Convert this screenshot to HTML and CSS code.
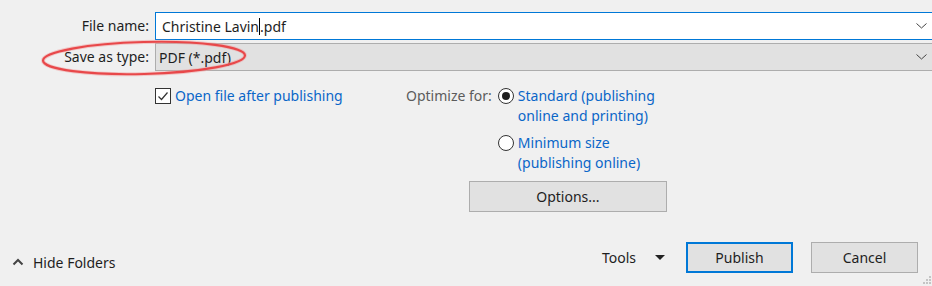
FILE: index.html
```html
<html>
    <head>
        <link rel="stylesheet" href="styles.css">
    </head>
    <body>
        <div class="dialog">
            <div class="fields">
                <label class="label">File name:</label>
                <div class="field field-name">
                    <span>Christine Lavin<span class="caret"></span>.pdf</span>
                    <svg class="chev" width="11" height="6" viewBox="0 0 11 6"><path d="M0.5 0.5 L5.5 5 L10.5 0.5" fill="none" stroke="#444" stroke-width="1"/></svg>
                </div>
                <label class="label">Save as type:</label>
                <div class="field field-type">
                    <span>PDF (*.pdf)</span>
                    <svg class="chev" width="11" height="6" viewBox="0 0 11 6"><path d="M0.5 0.5 L5.5 5 L10.5 0.5" fill="none" stroke="#444" stroke-width="1"/></svg>
                </div>
            </div>

            <div class="options">
                <div class="check-col">
                    <div class="check-row">
                        <span class="checkbox">
                            <svg width="14" height="14" viewBox="0 0 14 14"><path d="M2.5 7.5 L5.5 10.5 L11.5 3.5" fill="none" stroke="#333" stroke-width="1.2"/></svg>
                        </span>
                        <span class="link">Open file after publishing</span>
                    </div>
                </div>
                <div class="optimize">
                    <span class="opt-label">Optimize for:</span>
                    <div class="radios">
                        <div class="radio-row">
                            <span class="radio on"></span>
                            <span class="link">Standard (publishing<br>online and printing)</span>
                        </div>
                        <div class="radio-row">
                            <span class="radio"></span>
                            <span class="link">Minimum size<br>(publishing online)</span>
                        </div>
                        <button class="btn btn-options">Options...</button>
                    </div>
                </div>
            </div>

            <div class="footer">
                <div class="hide">
                    <svg width="12" height="8" viewBox="0 0 12 8"><path d="M1.5 6.5 L6 2 L10.5 6.5" fill="none" stroke="#444" stroke-width="2"/></svg>
                    <span>Hide Folders</span>
                </div>
                <div class="actions">
                    <span class="tools">Tools</span>
                    <svg class="tools-caret" width="10" height="6" viewBox="0 0 10 6"><path d="M0 0 L10 0 L5 5 Z" fill="#222"/></svg>
                    <button class="btn btn-default">Publish</button>
                    <button class="btn">Cancel</button>
                </div>
            </div>

            <!-- annotation drawn over the dialog -->
            <svg class="mark" width="214" height="44" viewBox="0 0 214 44">
                <ellipse cx="107" cy="22" rx="101" ry="16" transform="rotate(-1.5 107 22)" fill="none" stroke="#f2a0a0" stroke-width="4" opacity="0.5"/>
                <ellipse cx="107" cy="22" rx="101" ry="16" transform="rotate(-1.5 107 22)" fill="none" stroke="#e8484a" stroke-width="2.2"/>
            </svg>

            <svg class="grip" width="8" height="8" viewBox="0 0 8 8">
                <rect x="6" y="0" width="2" height="2" fill="#c4c4c4"/>
                <rect x="3" y="3" width="2" height="2" fill="#c4c4c4"/>
                <rect x="6" y="3" width="2" height="2" fill="#c4c4c4"/>
                <rect x="0" y="6" width="2" height="2" fill="#c4c4c4"/>
                <rect x="3" y="6" width="2" height="2" fill="#c4c4c4"/>
                <rect x="6" y="6" width="2" height="2" fill="#c4c4c4"/>
            </svg>
        </div>
    </body>
</html>
```

FILE: styles.css
```css
body
{
    margin: 0;
    background: #f0f0f0;
    font-family: "Noto Sans", "Liberation Sans", sans-serif;
    font-size: 14px;
    color: #1e1e1e;
    overflow: hidden;
}
.dialog
{
    position: relative;
    width: 932px;
    height: 286px;
}
.fields
{
    display: grid;
    grid-template-columns: 149px 1fr;
    column-gap: 6px;
    row-gap: 3px;
    padding-top: 12px;
}
.label
{
    text-align: right;
    line-height: 28px;
}
.field
{
    height: 26px;
    display: flex;
    align-items: center;
    justify-content: space-between;
    padding: 0 4px 0 6px;
}
.field-name
{
    background: #fff;
    border: 1px solid #0078d7;
    border-right: none;
}
.field-type
{
    background: #e1e1e1;
    border-top: 1px solid #adadad;
    border-bottom: 1px solid #adadad;
    border-left: 1px solid #adadad;
    padding-left: 3px;
}
.caret
{
    display: inline-block;
    width: 1px;
    height: 17px;
    background: #000;
    vertical-align: -3px;
}
.chev
{
    margin-right: 1px;
}

.options
{
    display: flex;
    padding-top: 17px;
}
.check-col
{
    width: 251px;
    padding-left: 155px;
}
.check-row, .radio-row
{
    display: flex;
    align-items: flex-start;
    gap: 4px;
}
.checkbox
{
    width: 14px;
    height: 14px;
    border: 1px solid #333;
    background: #fff;
}
.link
{
    color: #0a66c8;
    line-height: 20px;
    margin-top: -2px;
}
.optimize
{
    display: flex;
    gap: 6px;
}
.opt-label
{
    color: #5c5c5c;
    line-height: 20px;
    margin-top: -2px;
}
.radios
{
    display: flex;
    flex-direction: column;
    gap: 9px;
}
.radio
{
    width: 14px;
    height: 14px;
    border: 1px solid #333;
    border-radius: 50%;
    background: #fff;
    display: flex;
    align-items: center;
    justify-content: center;
}
.radio.on::after
{
    content: "";
    width: 8px;
    height: 8px;
    border-radius: 50%;
    background: #1e1e1e;
}

.btn
{
    font-family: inherit;
    font-size: 14px;
    color: #1e1e1e;
    background: #e1e1e1;
    border: 1px solid #adadad;
    height: 31px;
    width: 107px;
    padding: 0;
}
.btn-options
{
    width: 198px;
    margin-left: -29px;
    margin-top: -1px;
}
.btn-default
{
    border: 2px solid #0078d7;
}

.footer
{
    display: flex;
    justify-content: space-between;
    align-items: center;
    padding-top: 30px;
}
.hide
{
    display: flex;
    align-items: center;
    gap: 9px;
    padding-left: 12px;
    margin-top: 9px;
}
.actions
{
    display: flex;
    align-items: center;
    padding-right: 14px;
}
.tools
{
    margin-right: 19px;
}
.tools-caret
{
    margin-right: 21px;
}
.actions .btn + .btn
{
    margin-left: 18px;
}
.mark
{
    position: absolute;
    left: 37px;
    top: 36px;
}
.grip
{
    position: absolute;
    right: 1px;
    bottom: 2px;
}
```
